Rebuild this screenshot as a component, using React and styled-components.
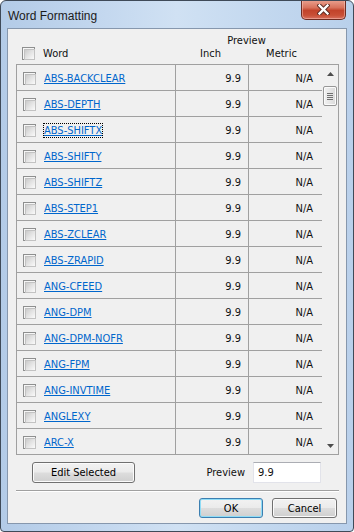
import React from "react";
import styled, { createGlobalStyle } from "styled-components";

const GlobalStyle = createGlobalStyle`
  html, body {
    margin: 0;
    padding: 0;
    background: #ffffff;
  }
  * {
    box-sizing: border-box;
  }
`;

const words = [
  "ABS-BACKCLEAR",
  "ABS-DEPTH",
  "ABS-SHIFTX",
  "ABS-SHIFTY",
  "ABS-SHIFTZ",
  "ABS-STEP1",
  "ABS-ZCLEAR",
  "ABS-ZRAPID",
  "ANG-CFEED",
  "ANG-DPM",
  "ANG-DPM-NOFR",
  "ANG-FPM",
  "ANG-INVTIME",
  "ANGLEXY",
  "ARC-X",
];

const uiFont = `"DejaVu Sans Condensed", "Liberation Sans", sans-serif`;

export default function App() {
  return (
    <>
      <GlobalStyle />
      <Window>
        <TitleBar>
          <Title>Word Formatting</Title>
          <CloseButton aria-label="Close">
            <svg width="13" height="11" viewBox="0 0 13 11">
              <path d="M2.5 1.5 L10.5 9.5 M10.5 1.5 L2.5 9.5" stroke="#5a2a22" strokeWidth="4.2" strokeLinecap="square" />
              <path d="M2.5 1.5 L10.5 9.5 M10.5 1.5 L2.5 9.5" stroke="#ffffff" strokeWidth="2.4" strokeLinecap="square" />
            </svg>
          </CloseButton>
        </TitleBar>

        <Client>
          <Header>
            <HeaderWord>
              <CheckBox />
              <span>Word</span>
            </HeaderWord>
            <HeaderPreview>
              <PreviewCaption>Preview</PreviewCaption>
              <HeaderUnits>
                <span>Inch</span>
                <span>Metric</span>
              </HeaderUnits>
            </HeaderPreview>
          </Header>

          <Table>
            <Rows>
              {words.map((w, i) => (
                <Row key={w} $last={i === words.length - 1}>
                  <WordCell>
                    <CheckBox />
                    <WordLink $focused={w === "ABS-SHIFTX"}>{w}</WordLink>
                  </WordCell>
                  <ValueCell>9.9</ValueCell>
                  <ValueCell $metric>N/A</ValueCell>
                </Row>
              ))}
            </Rows>
            <ScrollBar>
              <Arrow>
                <svg width="7" height="4" viewBox="0 0 7 4">
                  <path d="M0 4 L3.5 0 L7 4 Z" fill="#4d4d4d" />
                </svg>
              </Arrow>
              <Thumb>
                <Grip />
                <Grip />
                <Grip />
                <Grip />
              </Thumb>
              <Track />
              <Arrow>
                <svg width="7" height="4" viewBox="0 0 7 4">
                  <path d="M0 0 L7 0 L3.5 4 Z" fill="#4d4d4d" />
                </svg>
              </Arrow>
            </ScrollBar>
          </Table>

          <EditRow>
            <Button $width={103}>Edit Selected</Button>
            <PreviewField>
              <Label>Preview</Label>
              <TextBox>9.9</TextBox>
            </PreviewField>
          </EditRow>

          <Separator />

          <DialogButtons>
            <Button $width={64} $default>OK</Button>
            <Button $width={65}>Cancel</Button>
          </DialogButtons>
        </Client>
      </Window>
    </>
  );
}

const Window = styled.div`
  width: 354px;
  height: 532px;
  display: flex;
  flex-direction: column;
  border: 1px solid #3f4a58;
  border-radius: 6px 6px 4px 4px;
  background: linear-gradient(90deg, #b3cbe7 0%, #c4d8ef 30%, #d0e1f3 50%, #c3d8ef 75%, #b9d0eb 100%);
  overflow: hidden;
`;

const TitleBar = styled.div`
  height: 27px;
  flex: none;
  display: flex;
  justify-content: space-between;
  align-items: flex-start;
  padding: 0 7px 0 7px;
`;

const Title = styled.div`
  font-family: "Liberation Sans", sans-serif;
  font-size: 12px;
  color: #1b1b1b;
  line-height: 14px;
  margin-top: 8px;
`;

const CloseButton = styled.div`
  width: 45px;
  height: 20px;
  margin-top: -1px;
  display: flex;
  align-items: center;
  justify-content: center;
  border: 1px solid #6e2c22;
  border-top: none;
  border-radius: 0 0 5px 5px;
  background: linear-gradient(180deg, #eaa291 0%, #d8725c 40%, #c2432b 55%, #c84f36 80%, #d8705f 100%);
  box-shadow: inset 0 0 0 1px rgba(255, 210, 200, 0.45);
`;

const Client = styled.div`
  flex: 1;
  display: flex;
  flex-direction: column;
  margin: 0 6px 7px 6px;
  border: 1px solid #8697ad;
  background: #f0f0f0;
  font-family: ${uiFont};
  font-size: 11px;
  color: #111;
`;

const Header = styled.div`
  height: 35px;
  flex: none;
  display: grid;
  grid-template-columns: 153px 147px;
  padding-left: 14px;
  align-items: end;
  padding-bottom: 4px;
`;

const HeaderWord = styled.div`
  display: flex;
  align-items: center;
  gap: 8px;
`;

const HeaderPreview = styled.div`
  display: flex;
  flex-direction: column;
  align-items: center;
  padding-right: 4px;
`;

const PreviewCaption = styled.div`
  line-height: 12px;
`;

const HeaderUnits = styled.div`
  width: 100%;
  display: grid;
  grid-template-columns: 71px 71px;
  justify-items: center;
  line-height: 13px;
`;

const Table = styled.div`
  height: 391px;
  flex: none;
  margin: 0 7px 0 8px;
  border: 1px solid #a0a0a0;
  display: flex;
`;

const Rows = styled.div`
  flex: 1;
  display: flex;
  flex-direction: column;
`;

const Row = styled.div`
  height: ${(p) => (p.$last ? 25 : 26)}px;
  display: grid;
  grid-template-columns: 159px 73px 73px;
  border-bottom: ${(p) => (p.$last ? "none" : "1px solid #a0a0a0")};
`;

const WordCell = styled.div`
  display: flex;
  align-items: center;
  gap: 8px;
  padding-left: 6px;
  padding-top: 1px;
  border-right: 1px solid #a0a0a0;
`;

const ValueCell = styled.div`
  display: flex;
  align-items: center;
  justify-content: flex-end;
  padding-top: 1px;
  padding-right: ${(p) => (p.$metric ? 9 : 7)}px;
  border-right: ${(p) => (p.$metric ? "none" : "1px solid #a0a0a0")};
`;

const WordLink = styled.span`
  color: #0066cc;
  text-decoration: underline;
  line-height: 13px;
  outline: ${(p) => (p.$focused ? "1px dotted #000" : "none")};
`;

const CheckBox = styled.span`
  width: 13px;
  height: 13px;
  flex: none;
  display: inline-block;
  border: 1px solid #8e8f8f;
  background: #f6f6f6;
  padding: 1px;

  &::after {
    content: "";
    display: block;
    width: 9px;
    height: 9px;
    border: 1px solid #c2c2c2;
    background: linear-gradient(135deg, #cbcbcb 0%, #e4e4e4 50%, #fafafa 100%);
  }
`;

const ScrollBar = styled.div`
  width: 16px;
  flex: none;
  display: flex;
  flex-direction: column;
  align-items: center;
  background: #f0f0f0;
`;

const Arrow = styled.div`
  height: 17px;
  width: 100%;
  display: flex;
  align-items: center;
  justify-content: center;
  padding-left: 1px;
`;

const Thumb = styled.div`
  margin-top: 4px;
  width: 14px;
  height: 20px;
  border: 1px solid #979797;
  border-radius: 2px;
  background: linear-gradient(90deg, #f2f2f2 0%, #e6e6e6 50%, #dadada 100%);
  box-shadow: inset 0 0 0 1px #fbfbfb;
  display: flex;
  flex-direction: column;
  align-items: center;
  justify-content: center;
  gap: 1px;
`;

const Grip = styled.span`
  width: 6px;
  height: 1px;
  background: #6f6f6f;
`;

const Track = styled.div`
  flex: 1;
`;

const EditRow = styled.div`
  margin-top: 7px;
  height: 21px;
  flex: none;
  display: flex;
  justify-content: space-between;
  align-items: center;
  padding: 0 25px 0 24px;
`;

const Button = styled.div`
  width: ${(p) => p.$width}px;
  height: 21px;
  display: flex;
  align-items: center;
  justify-content: center;
  border: 1px solid ${(p) => (p.$default ? "#3c7fb1" : "#707070")};
  border-radius: 3px;
  background: linear-gradient(180deg, #f2f2f2 0%, #ebebeb 48%, #dddddd 52%, #cfcfcf 100%);
  box-shadow: inset 0 0 0 1px ${(p) => (p.$default ? "#8fdcf6" : "#fbfbfb")};
  color: #000;
`;

const PreviewField = styled.div`
  display: flex;
  align-items: center;
  gap: 8px;
`;

const Label = styled.span`
  line-height: 13px;
`;

const TextBox = styled.div`
  width: 68px;
  height: 21px;
  display: flex;
  align-items: center;
  padding-left: 4px;
  background: #fff;
  border: 1px solid #e2e3ea;
  border-top-color: #abadb3;
`;

const Separator = styled.div`
  margin: 7px 7px 0 8px;
  height: 2px;
  flex: none;
  border-top: 1px solid #a0a0a0;
  border-bottom: 1px solid #ffffff;
`;

const DialogButtons = styled.div`
  margin-top: 6px;
  height: 20px;
  flex: none;
  display: flex;
  justify-content: flex-end;
  gap: 9px;
  padding-right: 9px;

  & > div {
    height: 20px;
  }
`;
